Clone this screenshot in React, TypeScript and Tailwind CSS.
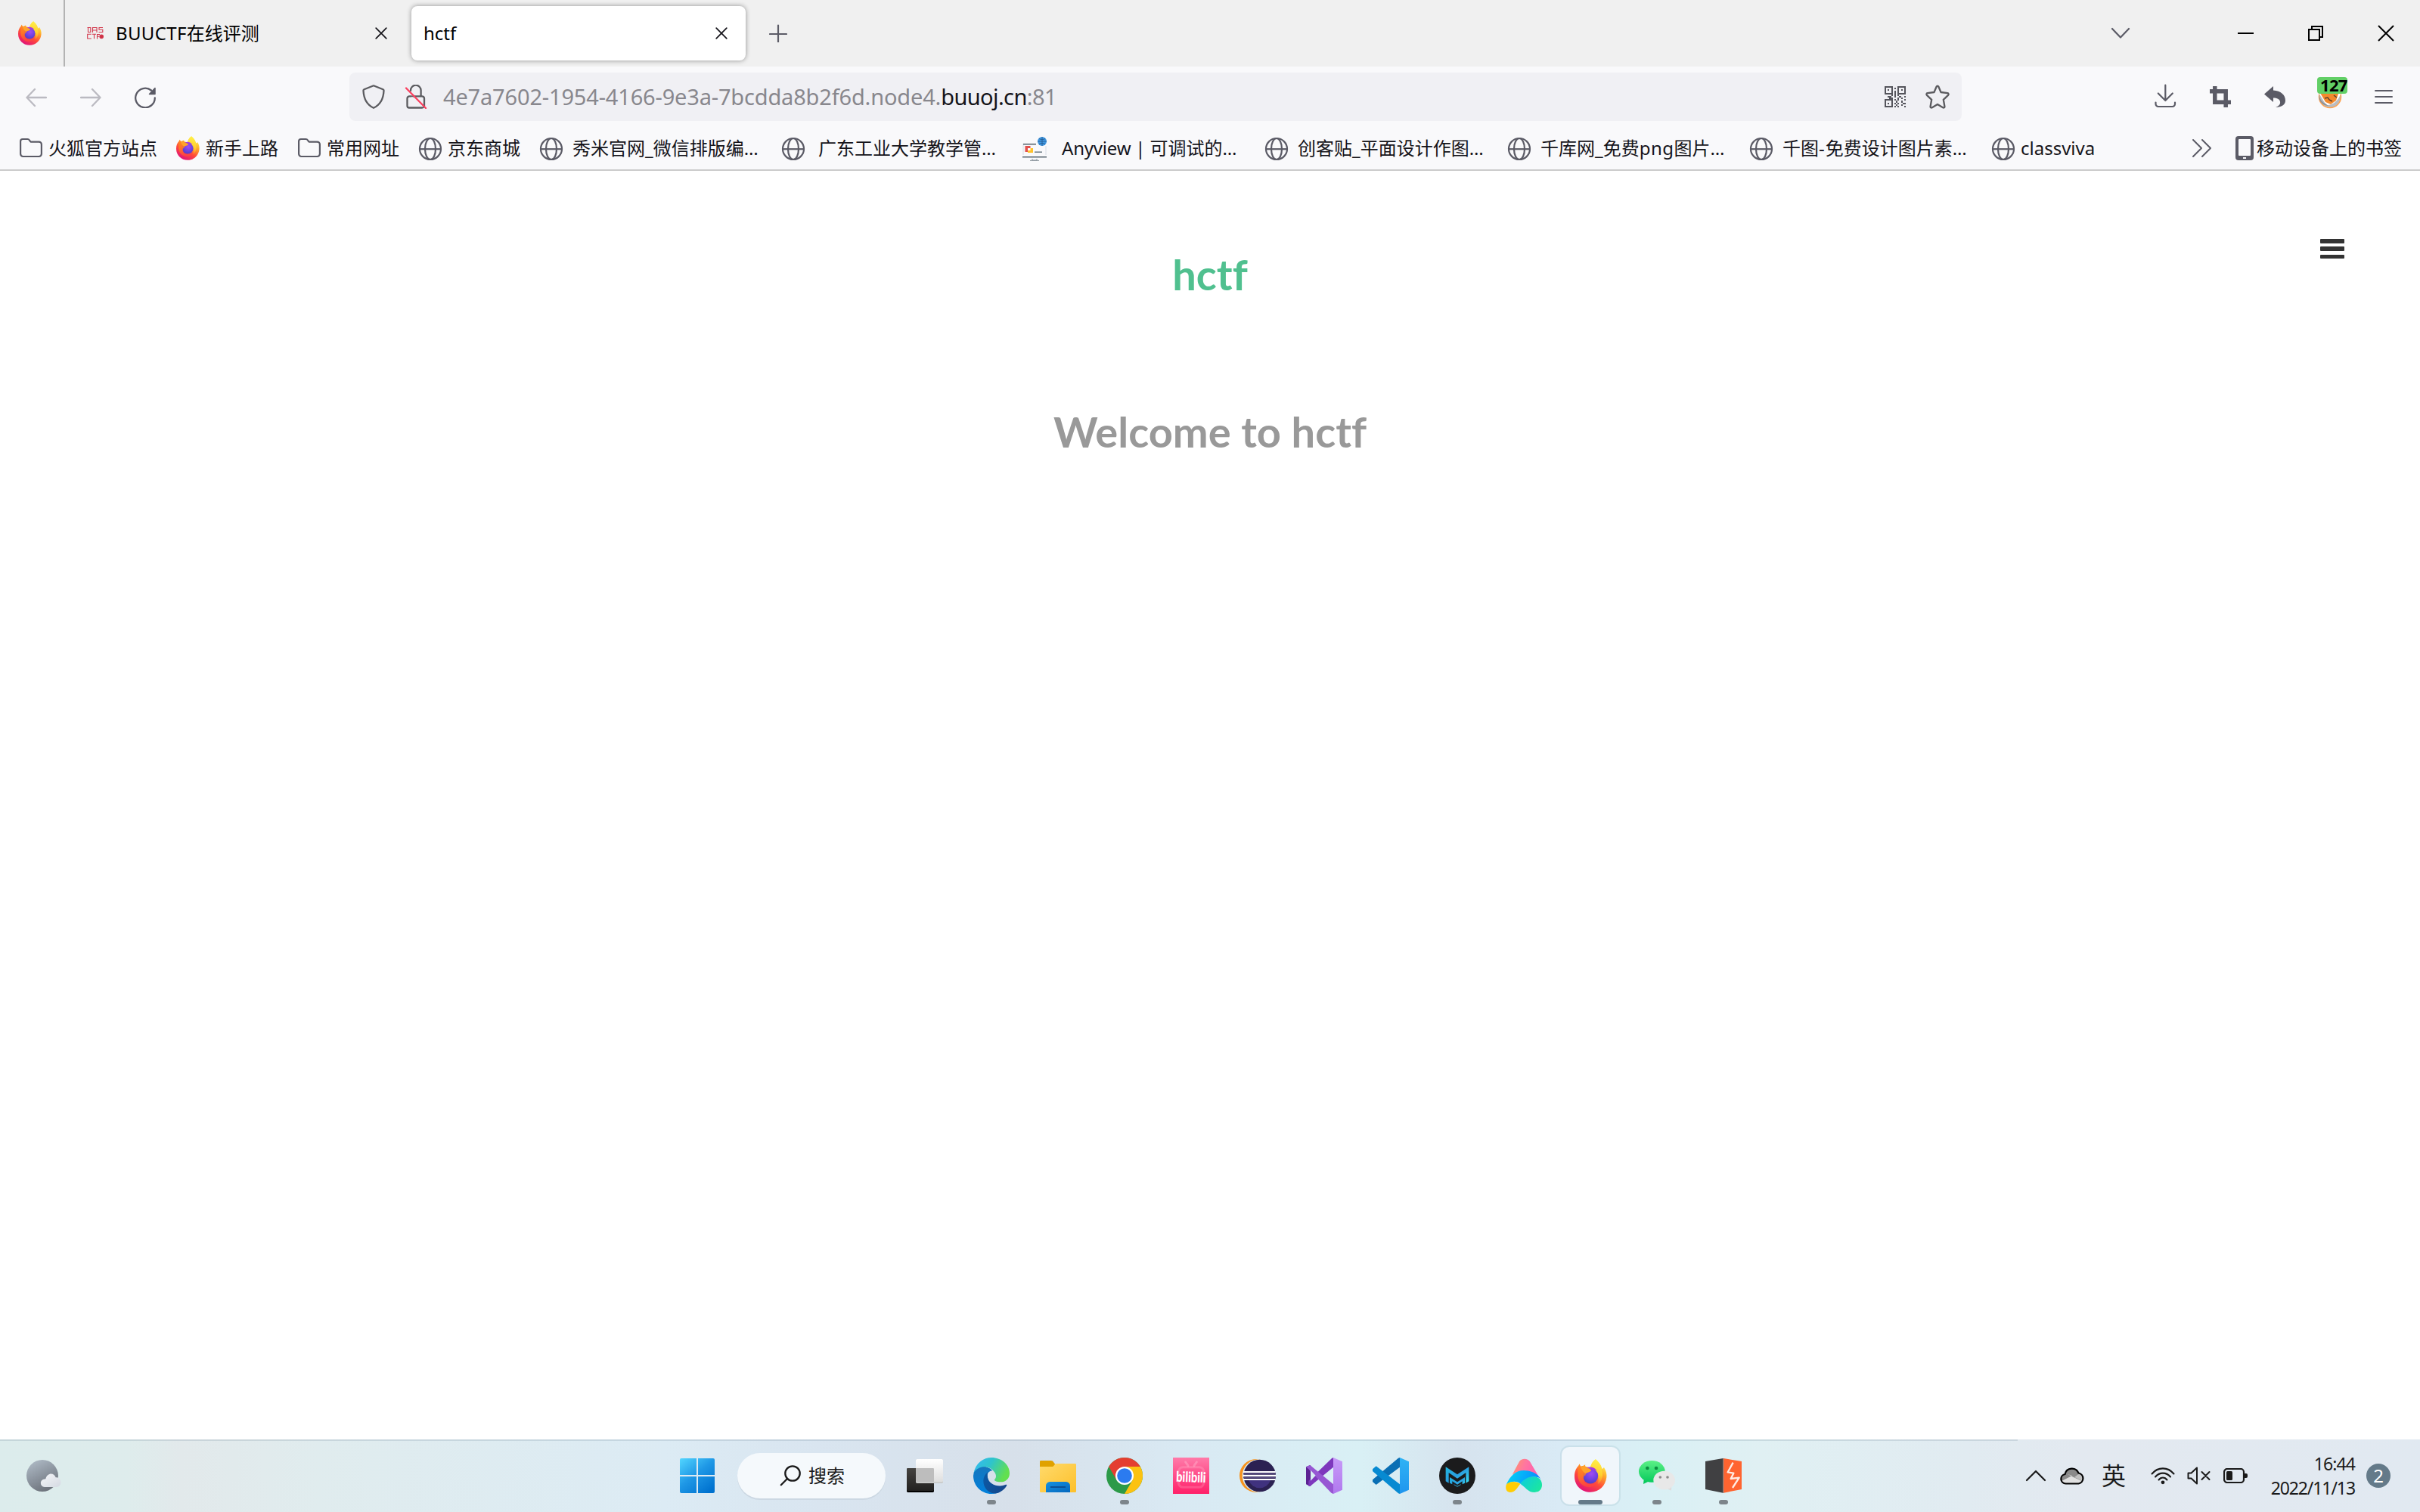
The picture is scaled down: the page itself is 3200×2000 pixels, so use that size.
import type { ReactNode } from "react";

/* ---------- shared glyphs ---------- */

function Firefox({ className, id }: { className: string; id: string }) {
  return (
    <svg className={className} viewBox="0 0 128 130">
      <defs>
        <linearGradient id={`${id}a`} x1="0.8" y1="0.1" x2="0.3" y2="1">
          <stop offset="0" stopColor="#fff44f" />
          <stop offset="0.3" stopColor="#ffa72a" />
          <stop offset="0.62" stopColor="#ff4a3a" />
          <stop offset="1" stopColor="#e0107c" />
        </linearGradient>
        <radialGradient id={`${id}b`} cx="0.55" cy="0.35" r="0.7">
          <stop offset="0" stopColor="#a24df0" />
          <stop offset="0.5" stopColor="#7542e5" />
          <stop offset="1" stopColor="#4a3fc0" />
        </radialGradient>
        <linearGradient id={`${id}c`} x1="0.6" y1="0" x2="0.5" y2="1">
          <stop offset="0" stopColor="#fff14a" />
          <stop offset="0.6" stopColor="#ffd02e" />
          <stop offset="1" stopColor="#ff9a2b" stopOpacity="0.4" />
        </linearGradient>
        <linearGradient id={`${id}d`} x1="0" y1="0" x2="0.3" y2="1">
          <stop offset="0" stopColor="#ff8a1e" />
          <stop offset="0.5" stopColor="#ff7a24" />
          <stop offset="1" stopColor="#ff4440" />
        </linearGradient>
      </defs>
      <path
        d="M83 0C100 14 106 26 108 38C112 36 114 34 116 32C124 44 128 58 126 72C122 106 96 130 63 130C28 130 0 104 0 68C0 50 6 36 14 28L20 18C22 24 22 26 24 28C30 26 36 26 40 28L62 34C66 18 72 8 83 0Z"
        fill={`url(#${id}a)`}
      />
      <path d="M83 0C100 14 106 30 108 44C114 66 108 88 92 98C98 78 92 60 80 46C70 36 62 30 64 26C68 14 74 6 83 0Z" fill={`url(#${id}c)`} />
      <circle cx="63" cy="66" r="30" fill={`url(#${id}b)`} />
      <path
        d="M20 20C22 26 24 29 26 30C34 28 42 22 42 22C41 28 43 32 47 34L62 40C68 43 66 48 56 51C48 53 42 58 44 64C40 62 36 66 36 74C34 92 50 100 64 98C78 97 90 88 90 88C80 112 50 116 30 100C12 86 8 60 20 20Z"
        fill={`url(#${id}d)`}
        opacity="0.85"
      />
      <path d="M24 30C34 28 42 22 42 22C41 28 43 32 47 34L62 40C68 43 66 48 56 51L42 56C36 50 28 44 24 30Z" fill="#ffa32a" />
      <path d="M48 34C58 28 78 30 88 44C80 40 76 42 74 44C68 38 58 36 48 34Z" fill="#a63be0" />
    </svg>
  );
}

function Globe() {
  return (
    <svg className="size-8" viewBox="0 0 32 32" fill="none" stroke="#5b5b66" strokeWidth="2.2">
      <circle cx="16" cy="16" r="14" />
      <ellipse cx="16" cy="16" rx="7" ry="14" />
      <path d="M2 16.2H30" />
    </svg>
  );
}

function Folder() {
  return (
    <svg className="size-8" viewBox="0 0 32 32" fill="none" stroke="#5b5b66" strokeWidth="2.2" strokeLinejoin="round">
      <path d="M5 3H11.500C13 3 13.600 4 14.500 5.200L15.600 6.600H26.500A3.400 3.400 0 0 1 29.900 10V22.600A3.400 3.400 0 0 1 26.500 26H5.500A3.400 3.400 0 0 1 2.100 22.600V6A3 3 0 0 1 5 3Z" />
    </svg>
  );
}

function AnyviewIcon() {
  return (
    <svg className="size-8" viewBox="0 0 32 32">
      <path d="M1 9V24M31 12V24" stroke="#d8dce6" strokeWidth="1" />
      <rect x="1" y="9" width="17" height="1.400" fill="#44545f" />
      <rect x="0" y="26" width="32" height="1.400" fill="#44545f" />
      <rect x="3.500" y="12" width="7" height="8" fill="#e2504d" />
      <rect x="7" y="15" width="7" height="6" fill="#ffc22d" />
      <rect x="7" y="15" width="3.500" height="3" fill="#fff" />
      <rect x="16" y="19.500" width="10" height="1.300" fill="#5a6a74" />
      <path d="M13 29V31H19V29M10 31.400H22" stroke="#8a949c" strokeWidth="1" fill="none" />
      <circle cx="26" cy="6" r="6" fill="#3f97e0" />
      <path d="M20 6H32M26 0V12M22 2.500C25 4 27 4 30 2.500M22 9.500C25 8 27 8 30 9.500" stroke="#24598f" strokeWidth="0.800" fill="none" />
    </svg>
  );
}

/* ---------- tab strip ---------- */

function CloseGlyph() {
  return (
    <svg className="size-4 shrink-0" viewBox="0 0 16 16" stroke="#15141a" strokeWidth="1.700" strokeLinecap="round">
      <path d="M1.200 1.200L14.800 14.800M14.800 1.200L1.200 14.800" />
    </svg>
  );
}

function TabStrip() {
  return (
    <div className="flex h-[88px] items-center bg-[#f0f0f0] text-2xl leading-[88px] text-black">
      <div className="flex h-full w-[86px] items-center border-r-2 border-[#b3b3b3] pl-[24px]">
        <Firefox className="h-[32px] w-[31px]" id="ff-pin" />
      </div>
      <div className="flex h-full w-[458px] items-center pl-[28px]">
        <svg className="h-[18px] w-6 shrink-0" viewBox="0 0 24 18" fill="none" stroke="#d2384c" strokeWidth="1.100">
          <path d="M1.500 1.500H5.800V7.500H2.500V1M8.500 8V1.500H14V8M8.500 5H14M22 1.500H17V4.300H21.800V7.500H16.500" />
          <path d="M6.800 10.300H1.700V16H6.800M8 10.300H13M10.500 10.300V16.300M14.500 16.500V10.500H18M14.500 13.300H17" />
          <circle cx="20.200" cy="13.300" r="2.300" fill="#cf3044" />
        </svg>
        <span className="ml-[15px] w-[343px] whitespace-nowrap">
          <span className="tracking-[0.35px]">BUUCTF</span>在线评测
        </span>
        <CloseGlyph />
      </div>
      <div className="flex h-[72px] w-[442px] items-center justify-between rounded-lg bg-white pr-[24px] pl-[16px] leading-[72px] shadow-[0_0_6px_rgba(0,0,0,0.4)]">
        <span>hctf</span>
        <CloseGlyph />
      </div>
      <svg className="ml-[31px] size-6" viewBox="0 0 24 24" stroke="#5b5b66" strokeWidth="2.200" strokeLinecap="round">
        <path d="M12 1.500V24M1 13H23" />
      </svg>
      <div className="ml-auto flex items-center pr-[33px]">
        <svg className="mr-[142px] h-4 w-[26px]" viewBox="0 0 26 16" fill="none" stroke="#5b5b66" strokeWidth="2.200" strokeLinecap="round" strokeLinejoin="round">
          <path d="M2 2L13 13.500L24 2" />
        </svg>
        <span className="mr-[71px] h-[2px] w-[21px] bg-black" />
        <svg className="mr-[70px] size-[22px]" viewBox="0 0 22 22" fill="none" stroke="#000" strokeWidth="2">
          <path d="M2 6H16V20H2ZM6 6V2H20V16H16" />
        </svg>
        <svg className="size-[24px]" viewBox="0 0 24 24" stroke="#000" strokeWidth="2">
          <path d="M2 2L22 22M22 2L2 22" />
        </svg>
      </div>
    </div>
  );
}

/* ---------- navigation bar ---------- */

const QR = [
  "11111.0.11111",
  "10001.1.10001",
  "10101.0.10101",
  "10001.1.10001",
  "11111.1.11111",
  "..0.1.1.1.0..",
  "00110.1.01.01",
  "...11.0.1.1.0",
  "11111.1.10.01",
  "10001..1.01.0",
  "10101.1.10.11",
  "10001..1.01..",
  "11111.1.10.01",
];

function NavBar() {
  return (
    <div className="flex h-[80px] items-center bg-[#f9f9fb]">
      <div className="flex w-[462px] items-center pt-[2px] pl-[34px]">
        <svg className="h-7 w-[28px]" viewBox="0 0 28 28" fill="none" stroke="#bbbac1" strokeWidth="2.300" strokeLinecap="round" strokeLinejoin="round">
          <path d="M12 3L1.500 14L12 25M1.500 14H27" />
        </svg>
        <svg className="ml-[44px] h-7 w-[28px]" viewBox="0 0 28 28" fill="none" stroke="#bbbac1" strokeWidth="2.300" strokeLinecap="round" strokeLinejoin="round">
          <path d="M16 3L26.500 14L16 25M26.500 14H1" />
        </svg>
        <svg className="ml-[44px] size-[28px]" viewBox="0 0 28 28" fill="none" stroke="#5b5b66" strokeWidth="2.300" strokeLinecap="round">
          <path d="M26.800 14.500A12.800 12.800 0 1 1 22 4.500" />
          <path d="M27 1.500V9.500H19.500Z" fill="#5b5b66" strokeWidth="1.500" strokeLinejoin="round" />
        </svg>
      </div>
      <div className="flex h-16 w-[2132px] items-center rounded-lg bg-[#f0f0f4] pr-[16px] pl-[16px]">
        <svg className="h-8 w-8" viewBox="0 0 32 32" fill="none" stroke="#5b5b5f" strokeWidth="2.300" strokeLinejoin="round">
          <path d="M16 1.300L28.500 6.300C29.200 6.600 29.600 7.200 29.500 8C29 19 24 27 16 30.800C8 27 3 19 2.500 8C2.400 7.200 2.800 6.600 3.500 6.300Z" />
        </svg>
        <svg className="ml-[24px] h-8 w-8" viewBox="0 0 32 32" fill="none" stroke="#5b5b5f" strokeWidth="2.300">
          <path d="M9 8V7.500A6.800 6.800 0 0 1 22.600 7.500V15M12 15.300H24A3 3 0 0 1 27 18.300V27A3 3 0 0 1 24 30.500H7A2.500 2.500 0 0 1 4.500 28V18.300A3 3 0 0 1 7.500 15.300H10" strokeLinecap="round" />
          <path d="M3 4.500L29 31" stroke="#f9405f" strokeLinecap="round" />
        </svg>
        <p className="ml-[20px] text-[29px] leading-[64px] whitespace-nowrap text-[#88878d]">
          <span className="tracking-[-0.170px]">4e7a7602-1954-4166-9e3a-7bcdda8b2f6d.node4.</span>
          <span className="tracking-[-0.600px] text-[#15141a]">buuoj.cn</span>
          <span className="tracking-[-0.600px]">:81</span>
        </p>
        <svg className="ml-auto size-7" viewBox="0 0 13 13" fill="#55555c" shapeRendering="crispEdges">
          {QR.flatMap((row, y) => [...row].map((c, x) => (c === "1" ? <rect key={`${x}-${y}`} x={x} y={y} width="1" height="1" /> : null)))}
        </svg>
        <svg className="ml-[26px] size-8" viewBox="0 0 32 32" fill="none" stroke="#5b5b5f" strokeWidth="2.300" strokeLinejoin="round">
          <path d="M14.700 2.500C15.200 1.400 16.800 1.400 17.300 2.500L20.500 10L29.300 11.200C30.600 11.400 31 12.900 30.100 13.800L23.800 19.800L25.400 28.800C25.600 30.100 24.300 31 23.100 30.300L16 26L8.900 30.300C7.700 31 6.400 30.100 6.600 28.800L8.200 19.800L1.900 13.800C1 12.900 1.400 11.400 2.700 11.200L11.500 10Z" />
        </svg>
      </div>
      <div className="flex flex-1 items-center pl-[254px]">
        <svg className="mt-[-2px] size-8" viewBox="0 0 32 32" fill="none" stroke="#5b5b66" strokeWidth="2.200" strokeLinecap="round" strokeLinejoin="round">
          <path d="M15.300 1.500V22M5.800 12.500L15.300 22L24.800 12.500M2.500 24.500V26.500A3.500 3.500 0 0 0 6 30H24.500A3.500 3.500 0 0 0 28 26.500V24.500" />
        </svg>
        <svg className="ml-[42px] size-7" viewBox="0 0 28 28" fill="none" stroke="#5b5b66" strokeWidth="5.500">
          <path d="M0 6.800H21.200V28M6.800 0V21.200H28" />
        </svg>
        <svg className="ml-[44px] size-7" viewBox="0 0 28 28" fill="#5b5b66">
          <path d="M0 10.500L12 0V5.500C22 6 28 11.500 28 19C28 24.500 23 28 15 28C20 26 21.500 23.500 21 20.500C20.500 17 17 15.500 12 15.500V21Z" />
        </svg>
        <div className="relative mt-[-10px] ml-[42px] h-[42px] w-10">
          <svg className="absolute top-[10px] left-[1px] size-8" viewBox="0 0 32 32">
            <circle cx="16" cy="16" r="14.500" fill="#b9bcc0" stroke="#ffa24d" strokeWidth="1.500" />
            <path d="M1 11L11 27C18 28 27 22 30 12V8H2Z" fill="#fff" />
            <path d="M3 11L10 23L17 26L24 21L28 9Z" fill="#f58a2c" />
            <path d="M1 12C3 20 5 23 10 25L14 28C9 28 4 25 2 20Z" fill="#8f9296" />
            <path d="M9 18L13 17L15 20L19 22M21 14L25 17" stroke="#5b4030" strokeWidth="1.400" fill="none" />
          </svg>
          <span className="absolute top-0 left-0 h-[22px] w-10 rounded-[4px] bg-[#62cf66] pl-[4px] text-[22px] leading-[20px] font-bold tracking-[-0.700px] text-black">
            127
          </span>
        </div>
        <div className="ml-[36px] flex h-[18px] w-6 flex-col justify-between">
          <span className="h-[2px] rounded-full bg-[#5b5b66]" />
          <span className="h-[2px] rounded-full bg-[#5b5b66]" />
          <span className="h-[2px] rounded-full bg-[#5b5b66]" />
        </div>
      </div>
    </div>
  );
}

/* ---------- bookmarks ---------- */

function Bookmark({ width, gap, icon, children }: { width: string; gap: string; icon: ReactNode; children: ReactNode }) {
  return (
    <div className={`flex shrink-0 items-center whitespace-nowrap ${width} ${gap}`}>
      <span className="flex size-8 shrink-0 items-center justify-center pt-[2px]">{icon}</span>
      <span>{children}</span>
    </div>
  );
}

function BookmarksBar() {
  return (
    <div className="flex h-[58px] items-center border-b-2 border-[#cccccc] bg-[#f9f9fb] pl-[25px] text-2xl leading-[56px] text-[#15141a]">
      <Bookmark width="w-[207px]" gap="gap-[7px]" icon={<Folder />}>火狐官方站点</Bookmark>
      <Bookmark width="w-[161px]" gap="gap-[8px]" icon={<Firefox className="h-[32px] w-[31px] shrink-0 -translate-y-px" id="ff-bm" />}>新手上路</Bookmark>
      <Bookmark width="w-[160px]" gap="gap-[7px]" icon={<Folder />}>常用网址</Bookmark>
      <Bookmark width="w-[160px]" gap="gap-[7px]" icon={<Globe />}>京东商城</Bookmark>
      <Bookmark width="w-[320px]" gap="gap-[12px]" icon={<Globe />}>秀米官网_微信排版编…</Bookmark>
      <Bookmark width="w-[319px]" gap="gap-[17px]" icon={<Globe />}>广东工业大学教学管…</Bookmark>
      <Bookmark width="w-[320px]" gap="gap-[20px]" icon={<AnyviewIcon />}>
        <span className="tracking-[-0.200px]">Anyview | </span>可调试的…
      </Bookmark>
      <Bookmark width="w-[321px]" gap="gap-[12px]" icon={<Globe />}>创客贴_平面设计作图…</Bookmark>
      <Bookmark width="w-[320px]" gap="gap-[12px]" icon={<Globe />}>千库网_免费<span className="tracking-[0.500px]">png</span>图片…</Bookmark>
      <Bookmark width="w-[320px]" gap="gap-[12px]" icon={<Globe />}>千图<span className="tracking-[1px]">-</span>免费设计图片素…</Bookmark>
      <Bookmark width="w-[200px]" gap="gap-[7px]" icon={<Globe />}>classviva</Bookmark>
      <svg className="ml-auto h-[26px] w-[27px] shrink-0" viewBox="0 0 27 26" fill="none" stroke="#5b5b66" strokeWidth="2" strokeLinecap="round" strokeLinejoin="round">
        <path d="M2 2L13 13L2 24M14 2L25 13L14 24" />
      </svg>
      <div className="mr-[24px] ml-[31px] flex shrink-0 items-center gap-[4px] whitespace-nowrap">
        <svg className="h-8 w-6" viewBox="0 0 24 32">
          <rect width="24" height="32" rx="4" fill="#5b5b66" />
          <rect x="4" y="4" width="16" height="22" rx="1" fill="#f9f9fb" />
          <rect x="10" y="28" width="4" height="2" fill="#f9f9fb" />
        </svg>
        移动设备上的书签
      </div>
    </div>
  );
}

/* ---------- page ---------- */

function Page() {
  return (
    <main className="relative flex flex-1 flex-col items-center bg-white pt-[106px] font-[Lato] text-[56px] leading-[62px] font-bold [font-variant-ligatures:none]">
      <button className="absolute top-[90px] right-[100px] flex h-[26px] w-[32px] flex-col justify-between">
        <span className="h-[5.500px] w-full rounded-[1px] bg-[#333]" />
        <span className="h-[5.500px] w-full rounded-[1px] bg-[#333]" />
        <span className="h-[5.500px] w-full rounded-[1px] bg-[#333]" />
      </button>
      <h1 className="text-[#50c08f]">hctf</h1>
      <h2 className="mt-[146px] text-[#999999]">Welcome to hctf</h2>
    </main>
  );
}

/* ---------- taskbar ---------- */

function App48({ children, running }: { children: ReactNode; running?: boolean }) {
  return (
    <div className="relative size-12 shrink-0">
      <svg className="size-12" viewBox="0 0 144 144">{children}</svg>
      {running && <span className="absolute top-[56px] left-[18px] h-[6px] w-3 rounded-full bg-[#7d858b]" />}
    </div>
  );
}

function Grad({ id, from, mid, to, x2 = "0", y2 = "1" }: { id: string; from: string; mid?: string; to: string; x2?: string; y2?: string }) {
  return (
    <linearGradient id={id} x1="0" y1="0" x2={x2} y2={y2}>
      <stop offset="0" stopColor={from} />
      {mid && <stop offset="0.5" stopColor={mid} />}
      <stop offset="1" stopColor={to} />
    </linearGradient>
  );
}

function Apps() {
  return (
    <div className="flex items-center gap-10">
      <App48>
        <Grad id="tv1" from="#454340" to="#222120" />
        <Grad id="tv2" from="#ffffff" to="#dedede" />
        <rect y="42" width="108" height="96" rx="5" fill="#000" />
        <rect y="42" width="108" height="90" rx="5" fill="url(#tv1)" />
        <rect x="36" y="6" width="108" height="96" rx="5" fill="#c8cac9" />
        <rect x="36" y="6" width="108" height="91" rx="5" fill="url(#tv2)" />
        <path d="M36 42H104A4 4 0 0 1 108 46V97H41A5 5 0 0 1 36 92Z" fill="#bdbdbd" />
      </App48>
      <App48 running>
        <Grad id="ed1" from="#35b8f6" mid="#2fc4cb" to="#62e04f" x2="1" y2="0.4" />
        <Grad id="ed2" from="#1676bd" to="#0080dc" />
        <Grad id="ed3" from="#0b5aa6" to="#15488d" x2="1" y2="0.3" />
        <path d="M2 60C10 30 55 28 76 52C62 54 56 62 56 72C58 110 94 126 132 108C120 130 100 144 72 144C32 144 0 112 0 72Z" fill="url(#ed2)" />
        <path d="M58 58C46 66 40 80 40 92C40 122 62 144 92 142C110 137 126 124 133 110C133 107 130 107 127 108C106 118 58 112 56 72C56 64 58 58 58 58Z" fill="url(#ed3)" />
        <path d="M2 60C10 22 40 0 72 0C112 0 144 28 144 62C144 84 128 97 108 97C92 97 82 92 84 88C94 78 90 66 84 58C66 30 22 28 2 60Z" fill="url(#ed1)" />
      </App48>
      <App48>
        <Grad id="fo1" from="#ffda6c" to="#fdc02a" x2="1" />
        <Grad id="fo2" from="#1492e2" to="#0567bd" x2="1" />
        <path d="M0 16A4 4 0 0 1 4 12H44C50 12 52 14 56 20L62 28V40H0Z" fill="#e0a100" />
        <path d="M0 36H50C56 36 58 24 66 24H140A4 4 0 0 1 144 28V134A4 4 0 0 1 140 138H4A4 4 0 0 1 0 134Z" fill="url(#fo1)" />
        <path d="M24 138V112A16 16 0 0 1 40 96H104A16 16 0 0 1 120 112V138Z" fill="url(#fo2)" />
        <path d="M44 117H100" stroke="#0b4f94" strokeWidth="6" strokeLinecap="round" />
      </App48>
      <App48 running>
        <circle cx="72" cy="72" r="72" fill="#2c9a48" />
        <path d="M72 36H134.300A72 72 0 0 1 72 144L103.200 90Z" fill="#fcc211" />
        <path d="M72 36H134.300A72 72 0 0 0 9.700 36L40.800 90Z" fill="#e43e31" />
        <circle cx="72" cy="72" r="36" fill="#fff" />
        <circle cx="72" cy="72" r="29.500" fill="#2b7bf0" />
      </App48>
      <App48>
        <Grad id="bi" from="#ff7aa9" to="#ff2069" />
        <rect width="144" height="144" fill="url(#bi)" />
        <rect x="22" y="38" width="100" height="80" rx="18" fill="none" stroke="#fff" strokeOpacity="0.160" strokeWidth="9" />
        <path d="M50 18L60 32M94 18L84 32" stroke="#fff" strokeOpacity="0.220" strokeWidth="9" strokeLinecap="round" />
        <text x="72" y="76" textAnchor="middle" transform="rotate(2 72 72) scale(1 1.28)" fill="#fff" fontFamily="Lato" fontWeight="900" fontSize="44">
          bilibili
        </text>
      </App48>
      <App48>
        <circle cx="66" cy="72" r="66" fill="#f7931e" />
        <circle cx="76" cy="72" r="65" fill="#d9ecf4" />
        <circle cx="80" cy="72" r="64" fill="#2b2152" />
        <path d="M36 88H124A46 46 0 0 1 36 88Z" fill="#40327f" />
        <path d="M15 57H143M14 71.500H144M15 87H143" stroke="#fff" strokeWidth="6.500" />
        <path d="M15 64H143M15 79H143" stroke="#5b5085" strokeWidth="5" />
      </App48>
      <App48>
        <Grad id="vs" from="#c89bf8" to="#b078ee" />
        <path d="M0 37L16 30L20 34V110L16 114L0 106Z" fill="#5c2192" />
        <path d="M16 114L108 38V0L102 3L10 92V113Z" fill="#7e38bd" />
        <path d="M0 37L16 30L108 106V144L100 140L10 46Z" fill="#9757d3" />
        <path d="M18 50V92L38 71Z" fill="#d9edf4" />
        <path d="M108 0L144 16V128L108 144Z" fill="url(#vs)" />
      </App48>
      <App48>
        <Grad id="vc" from="#2fb3f5" to="#1f95ee" />
        <path d="M14 108L0 96V88L102 2L108 0V38Z" fill="#0a6fb4" />
        <path d="M14 34L0 46V54L102 142L108 144V106Z" fill="#078ad2" />
        <path d="M108 0L144 16V128L108 144Z" fill="url(#vc)" />
      </App48>
      <App48 running>
        <Grad id="mu" from="#1fb6dd" mid="#2a9fe0" to="#38dcf0" x2="1" />
        <circle cx="72" cy="72" r="72" fill="#1b1b1c" />
        <path d="M26 37L72 67L118 37V94L106 101V60L72 83L38 60V101L26 94Z" fill="url(#mu)" />
        <path d="M42 78L72 97L102 78V101L92 106V94L72 107L52 94V106L42 101ZM58 106L72 113L86 106V108L72 116L58 108Z" fill="url(#mu)" />
      </App48>
      <App48>
        <Grad id="a1" from="#ff9a62" mid="#ff76a0" to="#ff5fb0" x2="1" y2="0.3" />
        <Grad id="a2" from="#00d8f4" to="#0a8cff" x2="1" y2="0.2" />
        <Grad id="a3" from="#0ccbe0" to="#1be6a0" x2="1" y2="0.6" />
        <path d="M26 68L54 16C62 2 88 2 96 16L136 84C110 50 60 44 26 68Z" fill="url(#a1)" />
        <path d="M2 108C18 72 40 51 72 51C104 51 128 66 138 84C116 70 88 74 58 104C46 92 20 92 2 108Z" fill="url(#a2)" />
        <path d="M58 104C76 82 92 76 110 76C132 76 144 90 144 108C144 128 130 138 114 138C88 138 78 116 58 104Z" fill="url(#a3)" />
        <path d="M2 108C12 94 40 92 58 104C46 118 38 138 18 138C2 138-2 122 2 108Z" fill="#ffcd05" />
      </App48>
      <div className="relative -mx-[14px] flex size-[76px] items-center justify-center rounded-[10px] bg-[#f0f6fb] shadow-[0_0_0_2px_rgba(160,190,205,0.25)]">
        <Firefox className="h-[44px] w-[43px]" id="ff-task" />
        <span className="absolute bottom-0 left-[22px] h-[6px] w-8 rounded-full bg-[#647a89]" />
      </div>
      <App48 running>
        <Grad id="wc" from="#5cf086" to="#09cb5d" />
        <path d="M20 88L18 105L38 95Z" fill="#09cb5d" />
        <ellipse cx="52" cy="55" rx="52" ry="43" fill="url(#wc)" />
        <circle cx="34" cy="42" r="7" fill="#0c8d40" />
        <circle cx="69" cy="42" r="7" fill="#0c8d40" />
        <path d="M112 124L129 131L130 112Z" fill="#dedede" />
        <ellipse cx="101" cy="90" rx="43" ry="37" fill="#e8e8e8" />
        <circle cx="85" cy="78" r="5.500" fill="#8a8a8a" />
        <circle cx="114" cy="78" r="5.500" fill="#8a8a8a" />
      </App48>
      <App48 running>
        <path d="M0 15L70 3V140L0 126Z" fill="#404042" />
        <path d="M72 3L144 15V126L72 140Z" fill="#ff6430" />
        <path d="M71 3V140" stroke="#8e7a74" strokeWidth="4" />
        <path d="M110 20L89 58L112 62L101 84L134 80L108 120" fill="none" stroke="#ffece4" strokeWidth="7" strokeLinejoin="round" />
      </App48>
    </div>
  );
}

function Tray() {
  return (
    <div className="ml-auto flex items-center text-[#1a1a1a]">
      <svg className="mr-[18px] h-4 w-[28px]" viewBox="0 0 28 16" fill="none" stroke="#1a1a1a" strokeWidth="2.200" strokeLinecap="round" strokeLinejoin="round">
        <path d="M2 14L14 2L26 14" />
      </svg>
      <svg className="h-[24px] w-8" viewBox="0 0 32 24">
        <path d="M7.500 22.500A6.300 6.300 0 0 1 6.500 10A9.500 9.500 0 0 1 24.500 8.500A7.100 7.100 0 0 1 24.500 22.500Z" fill="#8a8a8a" />
        <path d="M10 10L20 15L29 19C28 22 26 22.500 24.500 22.500H7.500C5 22.500 3 21 2 19L16 12Z" fill="#e0e0e0" />
        <path d="M19 14L25 9.500C29 10 31 14 30 19Z" fill="#c0c0c0" />
        <path d="M7.500 22.500A6.300 6.300 0 0 1 6.500 10A9.500 9.500 0 0 1 24.500 8.500A7.100 7.100 0 0 1 24.500 22.500Z" fill="none" stroke="#000" strokeWidth="2.200" />
      </svg>
      <span className="ml-[23px] text-[32px] leading-[32px]">英</span>
      <svg className="ml-[33px] h-6 w-8" viewBox="0 0 32 24" fill="none" stroke="#1a1a1a" strokeWidth="2.100" strokeLinecap="round">
        <path d="M1.500 9.500C9.500 0 22.500 0 30.500 9.500M6 13.500C11.500 7 20.500 7 26 13.500M10.500 17.500C13.500 13.500 18.500 13.500 21.500 17.500" />
        <circle cx="16" cy="20.800" r="2.400" fill="#1a1a1a" stroke="none" />
      </svg>
      <svg className="ml-[16px] h-6 w-[31px]" viewBox="0 0 31 24" fill="none" stroke="#1a1a1a" strokeWidth="2" strokeLinejoin="round" strokeLinecap="round">
        <path d="M1.500 8.500V15.500H5.500L13 22.500V1.500L5.500 8.500ZM19.500 7L29.500 17M29.500 7L19.500 17" />
      </svg>
      <svg className="ml-[17px] h-[20px] w-8" viewBox="0 0 32 20">
        <rect x="1" y="1" width="26" height="18" rx="4" fill="none" stroke="#1a1a1a" strokeWidth="2.200" />
        <rect x="4" y="4" width="8" height="12" rx="1.500" fill="#1a1a1a" />
        <path d="M28 7H30A2 2 0 0 1 32 9V11A2 2 0 0 1 30 13H28Z" fill="#1a1a1a" />
      </svg>
      <div className="ml-[27px] w-[115px] text-right text-[23px] leading-[32px]">
        <p className="tracking-[-0.900px]">16:44</p>
        <p className="tracking-[-1.100px]">2022/11/13</p>
      </div>
      <span className="mr-[39px] ml-[15px] flex size-8 items-center justify-center rounded-full bg-[#647a89] text-[24px] leading-8 text-white">2</span>
    </div>
  );
}

function Taskbar() {
  return (
    <footer className="relative flex h-24 items-center bg-[linear-gradient(90deg,#dcecec_0px,#deecec_170px,#e2e9eb_240px,#e0ecee_420px,#dcebf4_880px,#d9e5f0_1080px,#d7e0ea_1340px,#d9e9f3_1560px,#d9f0f5_1800px,#d6e3ee_1930px,#d9eaf5_2060px,#d9f0f5_2180px,#e0f0f3_2330px,#e1ebf1_2600px,#e3e9f0_2750px,#e1e9f1_3200px)]">
      <span className="absolute top-0 left-0 h-[2px] w-[2668px] bg-[#6b8494]/20" />
      <svg className="ml-[35px] h-[42px] w-[46px]" viewBox="0 0 138 126">
        <Grad id="w1" from="#b4c0cc" to="#6f757e" x2="0.5" />
        <Grad id="w2" from="#f6f7f9" to="#d4d9e2" x2="1" />
        <circle cx="63" cy="63" r="63" fill="url(#w1)" />
        <path d="M72 108C50 106 52 76 76 76C82 50 110 50 116 70C142 66 144 108 118 108Z" fill="url(#w2)" />
      </svg>
      <div className="ml-[818px] flex items-center">
        <svg className="size-[46px]" viewBox="0 0 138 138">
          <defs>
            <linearGradient id="win" gradientUnits="userSpaceOnUse" x1="0" y1="0" x2="110" y2="138">
              <stop offset="0" stopColor="#52d6ff" />
              <stop offset="0.5" stopColor="#1f98e6" />
              <stop offset="1" stopColor="#0072cf" />
            </linearGradient>
          </defs>
          <path d="M6 0H66V66H0V6A6 6 0 0 1 6 0ZM72 0H132A6 6 0 0 1 138 6V66H72ZM0 72H66V138H6A6 6 0 0 1 0 132ZM72 72H138V132A6 6 0 0 1 132 138H72Z" fill="url(#win)" />
        </svg>
        <div className="mr-[28px] ml-[30px] flex h-[60px] w-[196px] items-center rounded-full bg-[#f5f9fc] pl-[56px] text-2xl leading-[60px] text-[#1a1a1a] shadow-[0_2px_0_#ccd8e3]">
          <svg className="size-7" viewBox="0 0 28 28" fill="none" stroke="#1a1a1a" strokeWidth="2.300" strokeLinecap="round">
            <circle cx="17" cy="11" r="9.700" />
            <path d="M10 18L1.800 26.300" />
          </svg>
          <span className="ml-[10px]">搜索</span>
        </div>
        <Apps />
      </div>
      <Tray />
    </footer>
  );
}

export default function App() {
  return (
    <div className="flex h-[2000px] w-[3200px] flex-col overflow-hidden font-['Noto_Sans','Noto_Sans_CJK_SC',sans-serif]">
      <TabStrip />
      <NavBar />
      <BookmarksBar />
      <Page />
      <Taskbar />
    </div>
  );
}
